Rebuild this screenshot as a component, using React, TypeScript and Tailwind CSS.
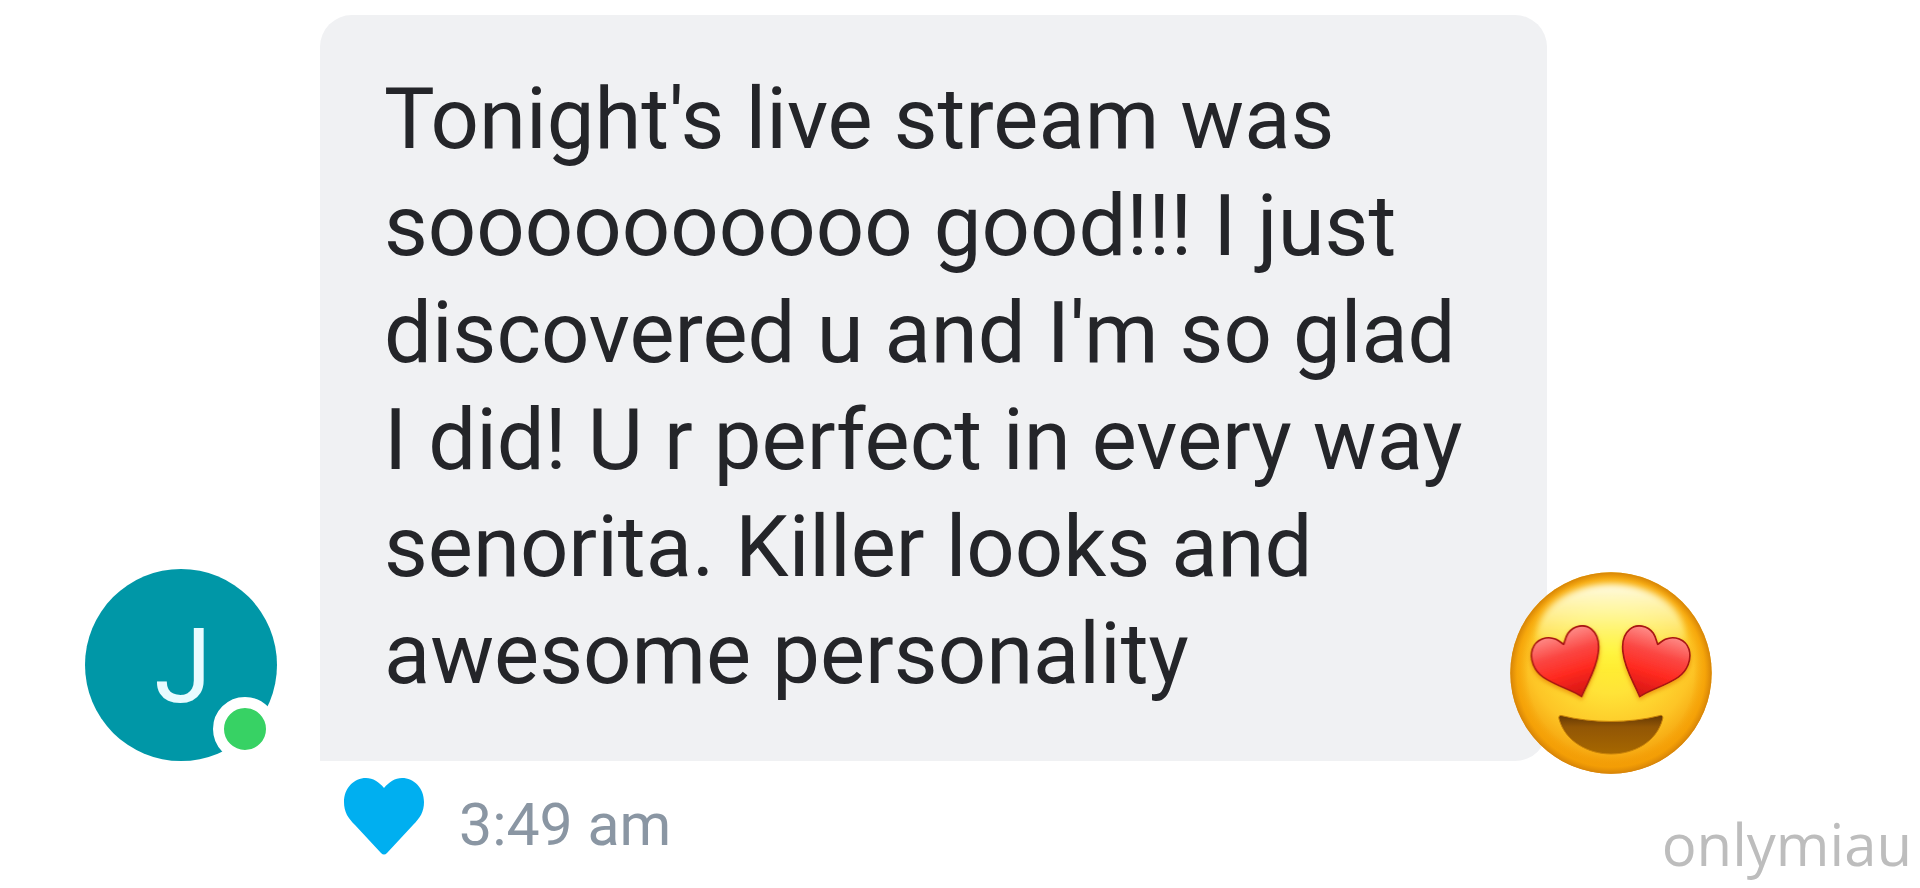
const MESSAGE =
  "Tonight's live stream was soooooooooo good!!! I just discovered u and I'm so glad I did! U r perfect in every way senorita. Killer looks and awesome personality";

function HeartEye() {
  return (
    <path
      d="M215 374 C188 354 140 343 100 316 C72 297 58 262 67 232 C77 202 111 190 138 202 C149 207 157 215 161 217 C164 210 166 196 174 184 C191 160 224 154 245 172 C262 186 269 211 265 242 C260 290 234 329 215 374 Z"
      fill="url(#heart-fill)"
      stroke="#a81412"
      strokeWidth="5"
      strokeLinejoin="round"
    />
  );
}

function HeartEyesEmoji({ className }: { className: string }) {
  return (
    <svg viewBox="0 0 606 606" className={className} role="img" aria-label="Smiling face with heart eyes">
      <defs>
        <radialGradient id="face-fill" cx="303" cy="235" r="370" gradientUnits="userSpaceOnUse">
          <stop offset="0" stopColor="#fff42f" />
          <stop offset="0.35" stopColor="#ffe338" />
          <stop offset="0.68" stopColor="#fdc526" />
          <stop offset="0.88" stopColor="#f5a40e" />
          <stop offset="1" stopColor="#e88b04" />
        </radialGradient>
        <radialGradient id="face-edge" cx="303" cy="303" r="303" gradientUnits="userSpaceOnUse">
          <stop offset="0.82" stopColor="#f59d00" stopOpacity="0" />
          <stop offset="0.93" stopColor="#f5a004" stopOpacity="0.75" />
          <stop offset="1" stopColor="#d48208" />
        </radialGradient>
        <linearGradient id="face-shine" x1="0" y1="30" x2="0" y2="290" gradientUnits="userSpaceOnUse">
          <stop offset="0" stopColor="#ffffff" stopOpacity="0.9" />
          <stop offset="0.4" stopColor="#ffffc4" stopOpacity="0.65" />
          <stop offset="1" stopColor="#fff96a" stopOpacity="0" />
        </linearGradient>
        <linearGradient id="heart-fill" x1="150" y1="165" x2="215" y2="370" gradientUnits="userSpaceOnUse">
          <stop offset="0" stopColor="#ff9c98" />
          <stop offset="0.38" stopColor="#fb4642" />
          <stop offset="0.65" stopColor="#ff2a20" />
          <stop offset="1" stopColor="#d31414" />
        </linearGradient>
        <linearGradient id="mouth-fill" x1="0" y1="430" x2="0" y2="548" gradientUnits="userSpaceOnUse">
          <stop offset="0" stopColor="#653804" />
          <stop offset="0.3" stopColor="#925605" />
          <stop offset="1" stopColor="#a76800" />
        </linearGradient>
        <filter id="eye-shadow" x="-20%" y="-20%" width="140%" height="150%">
          <feDropShadow dx="0" dy="7" stdDeviation="7" floodColor="#e87c00" floodOpacity="0.7" />
        </filter>
        <filter id="shine-soften" x="-20%" y="-20%" width="140%" height="140%">
          <feGaussianBlur stdDeviation="9" />
        </filter>
      </defs>
      <circle cx="303" cy="303" r="302" fill="url(#face-fill)" />
      <circle cx="303" cy="303" r="302" fill="url(#face-edge)" />
      <ellipse cx="303" cy="190" rx="222" ry="154" fill="url(#face-shine)" filter="url(#shine-soften)" />
      <g filter="url(#eye-shadow)">
        <HeartEye />
        <g transform="translate(604 0) scale(-1 1)">
          <HeartEye />
        </g>
      </g>
      <path
        d="M156 431 C245 454 360 454 448 431 C456 428 460 433 458 441 C440 510 372 546 303 546 C234 546 165 508 147 441 C145 433 148 429 156 431 Z"
        fill="url(#mouth-fill)"
        stroke="#c98208"
        strokeWidth="3"
      />
    </svg>
  );
}

function Avatar({ initial }: { initial: string }) {
  return (
    <div className="relative flex size-48 shrink-0 items-center justify-center rounded-full bg-[#0097a7]">
      <span className="pt-1 pl-1 text-[104px] leading-none text-[#e8fbff]">{initial}</span>
      <span className="absolute right-0 bottom-0 size-16 rounded-full border-[11px] border-white bg-[#37d264]" />
    </div>
  );
}

export default function App() {
  return (
    <main className="overflow-hidden bg-white pt-[15px] font-[Roboto,sans-serif]">
      <div className="flex items-end gap-[43px] pr-[373px] pl-[85px]">
        <Avatar initial="J" />
        <div className="relative flex-1 rounded-[32px] rounded-bl-none bg-[#f0f1f3] px-16 pt-[51px] pb-[53px]">
          <p className="text-[85px] leading-[107px] text-[#242529]">{MESSAGE}</p>
          <HeartEyesEmoji className="absolute -right-[165px] -bottom-[13px] size-[202px]" />
        </div>
      </div>
      <footer className="flex items-start justify-between pr-2 pl-[344px]">
        <div className="flex items-start gap-[35px] pt-[17px]">
          <button type="button" aria-label="Like">
            <svg viewBox="0 0 80 77" className="h-[77px] w-20" fill="#00aff0">
              <path d="M40 10 C45 4 51 0 58 0 C70 0 80 10 80 24 C80 34 76 40 69 47 L43 75 Q40 78 37 75 L11 47 C4 40 0 34 0 24 C0 10 10 0 22 0 C29 0 35 4 40 10 Z" />
            </svg>
          </button>
          <time className="pt-[13px] text-[59px] leading-[68px] text-[#8a96a3]">3:49 am</time>
        </div>
        <span className="pt-[42px] font-['Open_Sans',sans-serif] text-[58px] leading-[82px] text-[#bdbdbd]">onlymiau</span>
      </footer>
    </main>
  );
}
